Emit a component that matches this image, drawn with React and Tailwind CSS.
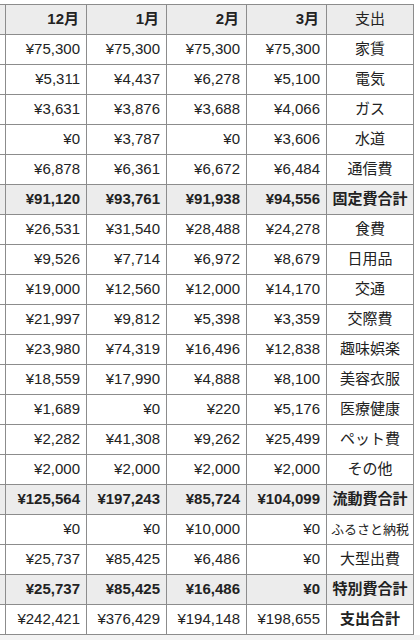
const rows = [
  { label: "家賃", v: ["75,300", "75,300", "75,300", "75,300"] },
  { label: "電気", v: ["5,311", "4,437", "6,278", "5,100"] },
  { label: "ガス", v: ["3,631", "3,876", "3,688", "4,066"] },
  { label: "水道", v: ["0", "3,787", "0", "3,606"] },
  { label: "通信費", v: ["6,878", "6,361", "6,672", "6,484"] },
  { label: "固定費合計", v: ["91,120", "93,761", "91,938", "94,556"], total: true },
  { label: "食費", v: ["26,531", "31,540", "28,488", "24,278"] },
  { label: "日用品", v: ["9,526", "7,714", "6,972", "8,679"] },
  { label: "交通", v: ["19,000", "12,560", "12,000", "14,170"] },
  { label: "交際費", v: ["21,997", "9,812", "5,398", "3,359"] },
  { label: "趣味娯楽", v: ["23,980", "74,319", "16,496", "12,838"] },
  { label: "美容衣服", v: ["18,559", "17,990", "4,888", "8,100"] },
  { label: "医療健康", v: ["1,689", "0", "220", "5,176"] },
  { label: "ペット費", v: ["2,282", "41,308", "9,262", "25,499"] },
  { label: "その他", v: ["2,000", "2,000", "2,000", "2,000"] },
  { label: "流動費合計", v: ["125,564", "197,243", "85,724", "104,099"], total: true },
  { label: "ふるさと納税", v: ["0", "0", "10,000", "0"], small: true },
  { label: "大型出費", v: ["25,737", "85,425", "6,486", "0"] },
  { label: "特別費合計", v: ["25,737", "85,425", "16,486", "0"], total: true },
  { label: "支出合計", v: ["242,421", "376,429", "194,148", "198,655"], boldLabel: true },
];

const grid = "grid grid-cols-[6px_81px_80px_80px_80px_87px] h-[30px]";
const cell = "border-r border-b border-[#8c8c8c] flex items-center";

export default function App() {
  return (
    <div
      className="min-h-[640px] bg-white text-[#222] text-[15px]"
      style={{ fontFamily: '"Liberation Sans", "Noto Sans CJK JP", sans-serif' }}
    >
      <div className="pt-[4px]">
        <div className="w-[414px] border-t border-[#8c8c8c]">
          <div className={`${grid} bg-[#ececec]`}>
            <div className={cell} />
            {["12月", "1月", "2月", "3月"].map((m) => (
              <div key={m} className={`${cell} justify-end pr-[7px] font-bold`}>
                {m}
              </div>
            ))}
            <div className={`${cell} justify-center`}>支出</div>
          </div>
          {rows.map((r) => (
            <div key={r.label} className={`${grid} ${r.total ? "bg-[#ececec] font-bold" : "bg-white"}`}>
              <div className={cell} />
              {r.v.map((x, i) => (
                <div key={i} className={`${cell} justify-end pr-[6px]`}>
                  ¥{x}
                </div>
              ))}
              <div
                className={`${cell} justify-center ${r.small ? "text-[13px]" : ""} ${
                  r.boldLabel ? "font-bold" : ""
                }`}
              >
                {r.label}
              </div>
            </div>
          ))}
        </div>
      </div>
      <div className="h-[6px] bg-[#f3f3f3]" />
    </div>
  );
}
